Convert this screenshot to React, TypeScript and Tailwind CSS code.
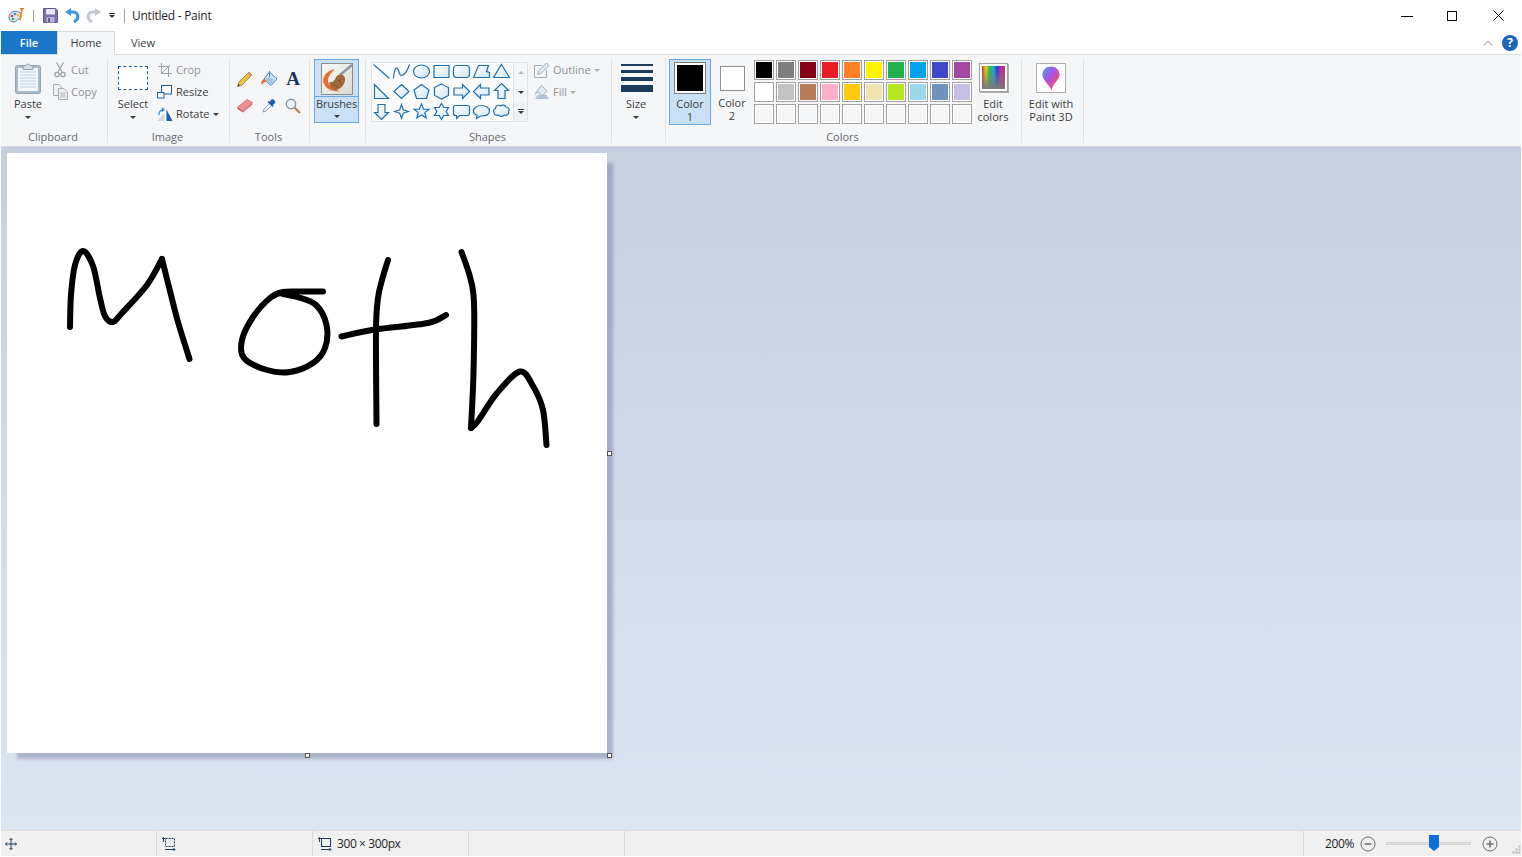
import type { ReactNode } from 'react';

const row1 = ['#000000', '#7f7f7f', '#880015', '#ed1c24', '#ff7f27', '#fff200', '#22b14c', '#00a2e8', '#3f48cc', '#a349a4'];
const row2 = ['#ffffff', '#c3c3c3', '#b97a57', '#ffaec9', '#ffc90e', '#efe4b0', '#b5e61d', '#99d9ea', '#7092be', '#c8bfe7'];
const row3 = ['', '', '', '', '', '', '', '', '', ''];

const shapes = [
	'M-8,-7 L8,7',
	'M-8,7 C-7,-6 -4,-6 -2,2 C0,7 5,2 8,-7',
	'M-8,0 a8,6.5 0 1 0 16,0 a8,6.5 0 1 0 -16,0Z',
	'M-7.5,-6 H7.5 V6 H-7.5Z',
	'M-5,-6 H5 a3,3 0 0 1 3,3 V3 a3,3 0 0 1 -3,3 H-5 a3,3 0 0 1 -3,-3 V-3 a3,3 0 0 1 3,-3Z',
	'M-8,6 L-3,-6 L7,-6 L5,0 L8,1 L8,6Z',
	'M0,-7 L8,6 L-8,6Z',
	'M-7,-7 L7,7 L-7,7Z',
	'M0,-7 L7.5,0 L0,7 L-7.5,0Z',
	'M0,-7 L7.5,-1.5 L5,7 L-5,7 L-7.5,-1.5Z',
	'M0,-7.5 L7,-4 L7,4 L0,7.5 L-7,4 L-7,-4Z',
	'M-7.5,-3.5 L1,-3.5 L1,-7 L8,0 L1,7 L1,3.5 L-7.5,3.5Z',
	'M7.5,-3.5 L-1,-3.5 L-1,-7 L-8,0 L-1,7 L-1,3.5 L7.5,3.5Z',
	'M0,-8 L7,-1 L3.5,-1 L3.5,7 L-3.5,7 L-3.5,-1 L-7,-1Z',
	'M0,8 L7,1 L3.5,1 L3.5,-7 L-3.5,-7 L-3.5,1 L-7,1Z',
	'M0,-7 L1.8,-1.8 L7,0 L1.8,1.8 L0,7 L-1.8,1.8 L-7,0 L-1.8,-1.8Z',
	'M0,-7.5 L2.1,-2.4 L7.5,-2.3 L3.3,1.1 L4.7,6.5 L0,3.5 L-4.7,6.5 L-3.3,1.1 L-7.5,-2.3 L-2.1,-2.4Z',
	'M0,-8 L2.3,-4 L7,-4 L4.6,0 L7,4 L2.3,4 L0,8 L-2.3,4 L-7,4 L-4.6,0 L-7,-4 L-2.3,-4Z',
	'M-6,-6 H6 a2,2 0 0 1 2,2 V2 a2,2 0 0 1 -2,2 H-2 L-5,7 V4 H-6 a2,2 0 0 1 -2,-2 V-4 a2,2 0 0 1 2,-2Z',
	'M-8,-0.5 C-8,-4 -4,-6 0,-6 C4,-6 8,-4 8,-0.5 C8,3 4,4.5 0,4.5 L-1,4.5 L-5,7 L-4.5,3.5 C-6.5,3 -8,1.5 -8,-0.5Z',
	'M-6,-3 C-6,-6 -2,-7 -1,-5.5 C1,-7 4,-6.5 4.5,-4.5 C7,-4.5 8.5,-2 7,0 C8,2.5 5,4.5 3,3.5 C1,5.5 -2,5 -3,3.5 C-5,4.5 -8,3 -7.5,0.5 C-8.5,-1 -7.5,-3 -6,-3Z',
];

const cx = [0, 1, 2, 3, 4, 5, 6];
const cy = [0, 1, 2];

// pen strokes in window coordinates, split at the sharp corners
const strokes: number[][][] = [
	[[70, 327], [71, 295], [75, 265], [83, 251], [93, 266], [100, 298], [105, 316], [113, 322], [122, 313], [147, 285], [162, 259]],
	[[162, 259], [170, 291], [178, 322], [189.5, 359]],
	[[323, 291.5], [300, 291.5], [283, 292], [270, 298], [253, 317], [242, 340], [244, 358], [267, 370], [290, 372], [313, 363], [325, 348], [326.5, 325], [316, 305], [297, 297], [283, 294]],
	[[388, 260], [382, 280], [378, 298], [376, 330], [376.5, 424]],
	[[341.5, 336.5], [375, 329.5], [428, 323], [446, 315]],
	[[461.5, 252], [470, 277], [474, 303], [473.5, 373], [471, 428]],
	[[471, 428], [478, 421], [497, 393], [520, 371.5], [533, 386], [543, 410], [546.5, 445]],
];

function smooth(pts: number[][]) {
	let d = `M${pts[0][0]},${pts[0][1]}`;
	for (let i = 0; i < pts.length - 1; i++) {
		const p0 = pts[Math.max(i - 1, 0)];
		const p1 = pts[i];
		const p2 = pts[i + 1];
		const p3 = pts[Math.min(i + 2, pts.length - 1)];
		const c1x = p1[0] + (p2[0] - p0[0]) / 6;
		const c1y = p1[1] + (p2[1] - p0[1]) / 6;
		const c2x = p2[0] - (p3[0] - p1[0]) / 6;
		const c2y = p2[1] - (p3[1] - p1[1]) / 6;
		d += ` C${c1x},${c1y} ${c2x},${c2y} ${p2[0]},${p2[1]}`;
	}
	return d;
}

function Caret({ className = 'border-t-[#3c3c3c]' }: { className?: string }) {
	return <span className={`inline-block w-0 h-0 border-x-[3px] border-x-transparent border-t-[3px] ${className}`} />;
}

function Group({ label, className, children }: { label?: string; className: string; children: ReactNode }) {
	return (
		<div className={`flex flex-col h-[85px] border-r border-[#e2e3e4] shrink-0 ${className}`}>
			<div className="flex h-[72px]">{children}</div>
			<div className="h-[13px] leading-[13px] text-center text-[#666a70] pr-[2px]">{label}</div>
		</div>
	);
}

function BigButton({ icon, lines, caret, className = '' }: { icon: ReactNode; lines: string[]; caret?: boolean; className?: string }) {
	return (
		<div className={`flex flex-col items-center pt-[2px] text-[#3c3c3c] ${className}`}>
			<div className="h-[37px] flex items-start justify-center pt-[3px]">{icon}</div>
			{lines.map((l) => (
				<div key={l} className="h-[13px] leading-[13px] whitespace-nowrap">{l}</div>
			))}
			{caret && <div className="h-[14px] flex items-center"><Caret /></div>}
		</div>
	);
}

function SmallRow({ icon, label, disabled, caret }: { icon: ReactNode; label: string; disabled?: boolean; caret?: boolean }) {
	return (
		<div className={`flex items-center h-[22px] ${disabled ? 'text-[#8d9196]' : 'text-[#3c3c3c]'}`}>
			<span className="w-[16px] h-[16px] mr-[3px] flex items-center justify-center">{icon}</span>
			{label}
			{caret && <span className="ml-[3px] flex"><Caret className={disabled ? 'border-t-[#a8abaf]' : 'border-t-[#3c3c3c]'} /></span>}
		</div>
	);
}

function PaletteIcon() {
	return (
		<svg width="17" height="16" viewBox="0 0 17 16">
			<path d="M1,9 C1,4 7,2 11,4 C14,6 14,10 11,11 C9,11 9,14 6,14 C3,14 1,12 1,9Z" fill="#dbe6ee" stroke="#5a7c96" />
			<circle cx="4" cy="8" r="1.3" fill="#e8443a" />
			<circle cx="7" cy="6" r="1.3" fill="#3a8fdc" />
			<circle cx="5" cy="11" r="1.3" fill="#42a85a" />
			<circle cx="10" cy="7" r="1.2" fill="#f2c230" />
			<path d="M14,1 L12,12" stroke="#e8963a" strokeWidth="2" />
			<path d="M12,0.5 h4" stroke="#c9702a" strokeWidth="1.5" />
		</svg>
	);
}

function SaveIcon() {
	return (
		<svg width="15" height="15" viewBox="0 0 15 15">
			<path d="M0.5,0.5 H12.5 L14.5,2.5 V14.5 H0.5Z" fill="#7d6fae" stroke="#64588f" />
			<rect x="3" y="1" width="9" height="5.5" fill="#e9e7f2" />
			<rect x="3.5" y="9" width="8" height="5.5" fill="#b9b3d4" />
			<rect x="5" y="10" width="2" height="4" fill="#64588f" />
		</svg>
	);
}

function UndoIcon({ color }: { color: string }) {
	return (
		<svg width="15" height="15" viewBox="0 0 15 15">
			<path d="M0,4 L6,0 V8Z" fill={color} />
			<path d="M5,4 H8 C11.5,4 12.8,6.5 12.8,8.8 C12.8,11 11.5,12.5 9,14" fill="none" stroke={color} strokeWidth="3.2" />
		</svg>
	);
}

function ClipboardIcon() {
	return (
		<svg width="26" height="31" viewBox="0 0 26 31">
			<rect x="0.5" y="2.5" width="25" height="28" rx="2" fill="#a9bccd" stroke="#8fa3b6" />
			<rect x="3" y="5" width="20" height="23" fill="#f2f6fa" />
			<path d="M5,9 H21 M5,12 H21 M5,15 H21 M5,18 H21 M5,21 H21 M5,24 H21" stroke="#c3d2e2" />
			<path d="M8,5 V3 H10.5 C10.5,0.5 15.5,0.5 15.5,3 H18 V6.5 H8Z" fill="#d4dde6" stroke="#93a3b3" />
		</svg>
	);
}

function ScissorsIcon() {
	return (
		<svg width="12" height="16" viewBox="0 0 12 16" fill="none" stroke="#9fa4aa" strokeWidth="1.3">
			<path d="M2.5,0.5 L8,10 M9.5,0.5 L4,10" />
			<circle cx="3" cy="12.5" r="2.2" />
			<circle cx="9" cy="12.5" r="2.2" />
		</svg>
	);
}

function CopyIcon() {
	return (
		<svg width="15" height="16" viewBox="0 0 15 16" fill="#eef1f4" stroke="#a8adb3">
			<path d="M0.5,0.5 H6 L8.5,3 V11.5 H0.5Z" />
			<path d="M5.5,4.5 H11 L14.5,8 V15.5 H5.5Z" />
			<path d="M7,9 H13 M7,11 H13 M7,13 H13" strokeWidth="0.8" />
		</svg>
	);
}

function CropIcon() {
	return (
		<svg width="14" height="14" viewBox="0 0 14 14" fill="none" stroke="#9aa1a8">
			<path d="M3.5,0 V10.5 H14 M0,3.5 H10.5 V14" />
			<path d="M3.5,10.5 L12,2" />
		</svg>
	);
}

function ResizeIcon() {
	return (
		<svg width="16" height="14" viewBox="0 0 16 14" fill="#fff" stroke="#1b5c9e">
			<rect x="4.5" y="0.5" width="10" height="8.5" />
			<rect x="0.5" y="7.5" width="6.5" height="5.5" />
		</svg>
	);
}

function RotateIcon() {
	return (
		<svg width="17" height="15" viewBox="0 0 17 15">
			<path d="M0,14.5 H8 V6Z" fill="#d4d7da" />
			<path d="M10,14.5 H16.5 L10,2Z" fill="#1d62a8" />
			<path d="M2,8 C2,4 4,2.5 7,2.5 M5,0.5 L7.5,2.5 L5,4.5" fill="none" stroke="#2a7ac8" strokeWidth="1.2" />
		</svg>
	);
}

function PencilIcon() {
	return (
		<svg width="16" height="16" viewBox="0 0 16 16">
			<path d="M0.5,15.5 L2,11 L12,1 L15,4 L5,14Z" fill="#f2c23c" stroke="#7a6a30" strokeWidth="0.7" />
			<path d="M0.5,15.5 L1.3,13 L3,14.7Z" fill="#333" />
			<path d="M12,1 L15,4 L13.5,5.5 L10.5,2.5Z" fill="#e88a72" />
		</svg>
	);
}

function BucketIcon() {
	return (
		<svg width="17" height="16" viewBox="0 0 17 16">
			<path d="M8.5,1 L16,8 L10,14.5 L3,8Z" fill="#cfe4f4" stroke="#4b85b5" />
			<path d="M8.5,0 V6" stroke="#4b85b5" />
			<path d="M3,8 C0,9 0,13 1,14 C2,12 3,11 6,10.5Z" fill="#ef6c2a" />
			<path d="M4,8 C7,6 10,6.5 13,8.5 L10,13.5Z" fill="#9cc6e6" />
		</svg>
	);
}

function EraserIcon() {
	return (
		<svg width="16" height="14" viewBox="0 0 16 14">
			<path d="M0.5,8 L10,0.5 L15.5,3.5 L6,12.5Z" fill="#ef8f8f" stroke="#c97070" strokeWidth="0.7" />
			<path d="M0.5,8 L6,12.5 L6,13.5 L0.5,10Z" fill="#b95c5c" />
			<path d="M6,12.5 L15.5,3.5 V5.5 L6,13.5Z" fill="#d56a6a" />
		</svg>
	);
}

function DropperIcon() {
	return (
		<svg width="15" height="15" viewBox="0 0 15 15">
			<path d="M1,14 L2,11 L8,5 L10,7 L4,13Z" fill="#e7eef4" stroke="#7d8a96" strokeWidth="0.8" />
			<path d="M7,4 L9.5,1.5 C11,0 14.5,3.5 13,5 L10.7,7.5 Z" fill="#1f5fa6" />
			<path d="M6,3.5 L11,8.5" stroke="#1f5fa6" strokeWidth="1.6" />
		</svg>
	);
}

function MagnifierIcon() {
	return (
		<svg width="16" height="16" viewBox="0 0 16 16">
			<circle cx="6" cy="6" r="4.7" fill="#e9f2f8" stroke="#88939c" strokeWidth="1.4" />
			<path d="M9.5,9.5 L15,15" stroke="#b5803f" strokeWidth="2.2" />
		</svg>
	);
}

function BrushArt() {
	return (
		<svg width="32" height="32" viewBox="0 0 32 32">
			<defs>
				<linearGradient id="brush-bg" x1="0" y1="0" x2="1" y2="1">
					<stop offset="0" stopColor="#fbfbf9" />
					<stop offset="1" stopColor="#d9d9d2" />
				</linearGradient>
			</defs>
			<rect x="0.5" y="0.5" width="31" height="31" fill="url(#brush-bg)" stroke="#8c8c8c" />
			<path d="M31,2 L19,12" stroke="#8f98a2" strokeWidth="2.4" />
			<path d="M14,6 C5,8 0,15 3,21 C6,27 13,29 19,28 C13,26 6,22 7,16 C8,12 11,9 14,6Z" fill="#ec6a2c" />
			<path d="M8,19 C12,20 14,17 15,14 C18,10 23,11 24,15 C25,20 20,27 14,27 C11,26 9,23 8,19Z" fill="#a0683a" />
			<path d="M14,21 L17,25 M18,17 L21,22" stroke="#7b4c28" />
		</svg>
	);
}

function Swatch({ color }: { color: string }) {
	return (
		<div className="w-[20px] h-[20px] border border-[#a0a0a0] p-px bg-white">
			<div className={`w-full h-full ${color ? '' : 'bg-[#f5f6f7]'}`} style={color ? { backgroundColor: color } : undefined} />
		</div>
	);
}

function StatusCell({ className, children }: { className: string; children?: ReactNode }) {
	return <div className={`h-full flex items-center border-r border-[#d9d9d9] shrink-0 ${className}`}>{children}</div>;
}

export default function App() {
	return (
		<div className="w-[1522px] h-[857px] flex flex-col bg-white px-px pb-px overflow-hidden font-['Open_Sans','Noto_Sans',sans-serif] text-[11px]">
			{/* title bar */}
			<div className="h-[31px] flex items-center shrink-0 pl-[7px] pr-[17px]">
				<PaletteIcon />
				<div className="w-px h-[12px] bg-[#a0a0a0] ml-[8px] mr-[9px]" />
				<SaveIcon />
				<div className="ml-[7px]"><UndoIcon color="#3a96e0" /></div>
				<div className="ml-[6px] -scale-x-100"><UndoIcon color="#c0c8d0" /></div>
				<div className="ml-[8px] flex flex-col items-center gap-px">
					<div className="w-[6px] h-px bg-[#333]" />
					<Caret className="border-t-[#333]" />
				</div>
				<div className="w-px h-[14px] bg-[#a0a0a0] ml-[9px] mr-[7px]" />
				<span className="text-[12px] text-[#1f1f1f] tracking-[-0.25px]">Untitled - Paint</span>
				<div className="ml-auto flex items-center">
					<svg width="12" height="12" viewBox="0 0 12 12" stroke="#000"><path d="M0,6.5 H12" /></svg>
					<svg className="ml-[34px]" width="10" height="10" viewBox="0 0 10 10" fill="none" stroke="#000"><rect x="0.5" y="0.5" width="9" height="9" /></svg>
					<svg className="ml-[36px]" width="11" height="11" viewBox="0 0 11 11" stroke="#000"><path d="M0.5,0.5 L10.5,10.5 M10.5,0.5 L0.5,10.5" /></svg>
				</div>
			</div>

			{/* tabs */}
			<div className="h-[24px] flex shrink-0 border-b border-[#dadbdc] pr-[3px] text-[11px]">
				<div className="w-[56px] h-[23px] pt-px bg-[#1a76c8] text-white font-semibold flex items-center justify-center">File</div>
				<div className="w-[58px] h-[24px] bg-[#f5f6f7] border-x border-t border-[#dadbdc] text-[#3c3c3c] flex items-center justify-center">Home</div>
				<div className="w-[56px] h-[23px] pt-px text-[#3c3c3c] flex items-center justify-center">View</div>
				<div className="ml-auto flex items-center gap-[9px]">
					<svg width="10" height="6" viewBox="0 0 10 6" fill="none" stroke="#b4b8bc" strokeWidth="1.2"><path d="M0.5,5.5 L5,1 L9.5,5.5" /></svg>
					<div className="w-[16px] h-[16px] rounded-full bg-[#1b64b8] text-white font-bold text-[12px] leading-[16px] text-center">?</div>
				</div>
			</div>

			{/* ribbon */}
			<div className="h-[92px] flex shrink-0 bg-[#f5f6f7] border-b border-[#d5dae2] pt-[3px] text-[11px]">
				<Group label="Clipboard" className="w-[107px]">
					<BigButton className="w-[40px] ml-[7px]" icon={<ClipboardIcon />} lines={['Paste']} caret />
					<div className="ml-[4px] pt-px">
						<SmallRow disabled icon={<ScissorsIcon />} label="Cut" />
						<SmallRow disabled icon={<CopyIcon />} label="Copy" />
					</div>
				</Group>
				<Group label="Image" className="w-[122px]">
					<BigButton
						className="w-[40px] ml-[5px]"
						icon={<div className="w-[30px] h-[24px] mt-[3px] border border-dashed border-[#1b5c9e] bg-white" />}
						lines={['Select']}
						caret
					/>
					<div className="ml-[4px] pt-px">
						<SmallRow disabled icon={<CropIcon />} label="Crop" />
						<SmallRow icon={<ResizeIcon />} label="Resize" />
						<SmallRow icon={<RotateIcon />} label="Rotate" caret />
					</div>
				</Group>
				<Group label="Tools" className="w-[80px]">
					<div className="grid grid-cols-[repeat(3,24px)] grid-rows-[repeat(2,27px)] ml-[3px] mt-[7px] place-items-center">
						<PencilIcon />
						<BucketIcon />
						<span className="font-['Liberation_Serif',serif] font-bold text-[19px] leading-none text-[#17365d]">A</span>
						<EraserIcon />
						<DropperIcon />
						<MagnifierIcon />
					</div>
				</Group>
				<Group className="w-[56px]">
					<div className="w-[45px] h-[64px] ml-[4px] mt-px bg-[#c9e0f7] border border-[#64a8e6] flex flex-col items-center text-[#3c3c3c]">
						<div className="h-[37px] w-full flex justify-center pt-[3px] border-b border-[#64a8e6]"><BrushArt /></div>
						<div className="h-[14px] leading-[14px] tracking-[-0.1px]">Brushes</div>
						<div className="h-[11px] flex items-center"><Caret /></div>
					</div>
				</Group>
				<Group label="Shapes" className="w-[246px]">
					<div className="flex ml-[5px] mt-[4px] h-[60px]">
						<div className="w-[143px] h-[60px] bg-[#fbfcfd] border border-[#dfe2e5]">
							<svg width="141" height="58" viewBox="1 1 141 58">
								<defs>
									<linearGradient id="shape-fill" x1="0" y1="0" x2="1" y2="1">
										<stop offset="0" stopColor="#ffffff" />
										<stop offset="1" stopColor="#cfe6f3" />
									</linearGradient>
								</defs>
								{cy.map((r) =>
									cx.map((c) => (
										<g key={`${r}-${c}`} transform={`translate(${10.5 + c * 20},${9.5 + r * 20})`}>
											<path
												d={shapes[r * 7 + c]}
												fill={r === 0 && c < 2 ? 'none' : 'url(#shape-fill)'}
												stroke="#1f6fb0"
												strokeWidth="1.2"
											/>
										</g>
									)),
								)}
							</svg>
						</div>
						<div className="w-[14px] h-[60px] flex flex-col border-y border-r border-[#dfe2e5]">
							<div className="h-[19px] flex items-center justify-center">
								<span className="w-0 h-0 border-x-[3px] border-x-transparent border-b-[3px] border-b-[#b8bcc0]" />
							</div>
							<div className="h-[20px] flex items-center justify-center"><Caret /></div>
							<div className="h-[19px] flex flex-col items-center justify-center gap-px bg-[#f0f1f2]">
								<div className="w-[6px] h-px bg-[#3c3c3c]" />
								<Caret />
							</div>
						</div>
					</div>
					<div className="ml-[6px] pt-px">
						<SmallRow
							disabled
							caret
							label="Outline"
							icon={
								<svg width="16" height="16" viewBox="0 0 16 16" fill="none" stroke="#a0aebc">
									<path d="M0.5,3.5 H8 M0.5,3.5 V15.5 H12.5 V8" />
									<path d="M3.5,12.5 L4.5,9 L12.5,1 L15,3.5 L7,11.5Z" fill="#e4e9ee" />
								</svg>
							}
						/>
						<SmallRow
							disabled
							caret
							label="Fill"
							icon={
								<svg width="17" height="16" viewBox="0 0 17 16">
									<path d="M1,15.5 H16 L13,11 H4Z" fill="#b3c3d4" />
									<path d="M8,1 L14,7 L9,12 L3,7Z" fill="#dfe6ec" stroke="#a0aebc" />
									<path d="M3,7 C1,8 0.5,10 1,12 C2,10.5 3,9.5 5,9Z" fill="#bcc6d0" />
								</svg>
							}
						/>
					</div>
				</Group>
				<Group className="w-[54px]">
					<BigButton
						className="w-[48px]"
						icon={
							<div className="w-[32px] flex flex-col gap-[4px] mt-[1px] ml-[2px]">
								<div className="h-[2px] bg-[#1e3a5c]" />
								<div className="h-[3px] bg-[#1e3a5c]" />
								<div className="h-[4px] bg-[#1e3a5c]" />
								<div className="h-[7px] bg-[#1e3a5c]" />
							</div>
						}
						lines={['Size']}
						caret
					/>
				</Group>
				<Group label="Colors" className="w-[356px]">
					<div className="w-[42px] h-[66px] ml-[3px] mt-px bg-[#c9e0f7] border border-[#64a8e6] flex flex-col items-center text-[#3c3c3c]">
						<div className="w-[32px] h-[32px] mt-[2px] mb-[3px] border border-[#7d7d7d] p-[2px] bg-white">
							<div className="w-full h-full bg-black" />
						</div>
						<div className="h-[13px] leading-[13px]">Color</div>
						<div className="h-[13px] leading-[13px]">1</div>
					</div>
					<div className="w-[42px] flex flex-col items-center pt-[8px] text-[#3c3c3c]">
						<div className="w-[25px] h-[25px] bg-white border border-[#8f8f8f] mb-[5px]" />
						<div className="h-[13px] leading-[13px]">Color</div>
						<div className="h-[13px] leading-[13px]">2</div>
					</div>
					<div className="flex flex-col gap-[2px] mt-[2px] ml-[1px]">
						{[row1, row2, row3].map((colors, i) => (
							<div key={i} className="flex gap-[2px]">
								{colors.map((c, j) => (
									<Swatch key={j} color={c} />
								))}
							</div>
						))}
					</div>
					<BigButton
						className="w-[44px] ml-[-1px]"
						icon={
							<div className="w-[29px] h-[29px] bg-white border border-[#a0a0a0] p-[2px] shadow-[1px_1px_0_#b0b0b0]">
								<div className="w-full h-full bg-[linear-gradient(to_bottom,transparent,#7a7a7a),linear-gradient(to_right,#e0281e,#f0e010,#20c040,#10b0e0,#3030d0,#c020c0,#e0281e)]" />
							</div>
						}
						lines={['Edit', 'colors']}
					/>
				</Group>
				<Group className="w-[62px]">
					<BigButton
						className="w-[60px] ml-[-1px]"
						icon={
							<div className="w-[30px] h-[30px] bg-white border border-[#b0b0b0] flex items-center justify-center">
								<svg width="18" height="25" viewBox="0 0 18 25">
									<defs>
										<linearGradient id="drop" x1="0" y1="0" x2="1" y2="1">
											<stop offset="0" stopColor="#3aa0f0" />
											<stop offset="0.45" stopColor="#b050e0" />
											<stop offset="0.75" stopColor="#f05070" />
											<stop offset="1" stopColor="#f8a020" />
										</linearGradient>
									</defs>
									<path d="M9,0.5 C14,0.5 17.5,4 17.5,9 C17.5,14 11,17 9.5,24.5 C8,19 0.5,14.5 0.5,9 C0.5,4 4,0.5 9,0.5Z" fill="url(#drop)" />
								</svg>
							</div>
						}
						lines={['Edit with', 'Paint 3D']}
					/>
				</Group>
			</div>

			{/* canvas area */}
			<div className="flex-1 min-h-0 bg-[linear-gradient(to_bottom,#c5cfe0,#dbe5f2)] pl-[6px] pt-[6px] border-b border-[#d9d9d9]">
				<div className="relative w-[600px] h-[600px] bg-white shadow-[8px_8px_3px_-2px_rgba(110,125,155,0.45)]">
					<svg width="600" height="600" viewBox="0 0 600 600" fill="none" stroke="#000" strokeWidth="6" strokeLinecap="round" strokeLinejoin="round">
						<g transform="translate(-7,-153)">
							{strokes.map((s, i) => (
								<path key={i} d={smooth(s)} />
							))}
						</g>
					</svg>
					<div className="absolute left-[600px] top-[298px] w-[5px] h-[5px] bg-white border border-[#555]" />
					<div className="absolute left-[298px] top-[600px] w-[5px] h-[5px] bg-white border border-[#555]" />
					<div className="absolute left-[600px] top-[600px] w-[5px] h-[5px] bg-white border border-[#555]" />
				</div>
			</div>

			{/* status bar */}
			<div className="h-[25px] flex items-center shrink-0 bg-[#f0f0f0] text-[12px] text-[#1f1f1f] tracking-[-0.4px]">
				<StatusCell className="w-[156px] pl-[4px]">
					<svg width="12" height="12" viewBox="0 0 12 12" fill="none" stroke="#1e3a5c">
						<path d="M6,0.5 V11.5 M0.5,6 H11.5 M4.5,2 L6,0.5 L7.5,2 M4.5,10 L6,11.5 L7.5,10 M2,4.5 L0.5,6 L2,7.5 M10,4.5 L11.5,6 L10,7.5" />
					</svg>
				</StatusCell>
				<StatusCell className="w-[156px] pl-[5px]">
					<svg width="14" height="14" viewBox="0 0 14 14" fill="none" stroke="#1e3a5c">
						<path d="M1.5,5 V0.5 M0,2 L1.5,0.5 L3,2" />
						<rect x="3.5" y="1.5" width="9" height="8" strokeDasharray="2 1" />
						<path d="M3,12.5 H13 M11.5,11 L13,12.5 L11.5,14" />
					</svg>
				</StatusCell>
				<StatusCell className="w-[156px] pl-[5px] gap-[5px]">
					<svg width="14" height="14" viewBox="0 0 14 14" fill="none" stroke="#1e3a5c">
						<path d="M1.5,5 V0.5 M0,2 L1.5,0.5 L3,2" />
						<rect x="3.5" y="1.5" width="9" height="8" />
						<path d="M3,12.5 H13 M11.5,11 L13,12.5 L11.5,14" />
					</svg>
					300 × 300px
				</StatusCell>
				<StatusCell className="w-[156px]" />
				<StatusCell className="w-[679px]" />
				<div className="pl-[21px] w-[56px] shrink-0">200%</div>
				<svg className="shrink-0" width="16" height="16" viewBox="0 0 16 16" fill="none" stroke="#6e6e6e">
					<circle cx="8" cy="8" r="7" />
					<path d="M4.5,8 H11.5" strokeWidth="1.5" />
				</svg>
				<div className="relative w-[85px] h-[3px] ml-[10px] shrink-0 bg-[#e0e3e0] border border-[#d2d4d2]">
					<svg className="absolute left-[42px] -top-[8px]" width="10" height="16" viewBox="0 0 10 16">
						<path d="M0,0 H10 V12 L5,16 L0,12Z" fill="#0a6fd6" />
					</svg>
				</div>
				<svg className="ml-[11px] shrink-0" width="16" height="16" viewBox="0 0 16 16" fill="none" stroke="#6e6e6e">
					<circle cx="8" cy="8" r="7" />
					<path d="M4.5,8 H11.5 M8,4.5 V11.5" strokeWidth="1.5" />
				</svg>
				<svg className="ml-[14px] mt-[12px] shrink-0" width="9" height="9" viewBox="0 0 9 9" fill="#b5b5b5">
					<rect x="6.5" y="0.5" width="2" height="2" />
					<rect x="3.5" y="3.5" width="2" height="2" />
					<rect x="6.5" y="3.5" width="2" height="2" />
					<rect x="0.5" y="6.5" width="2" height="2" />
					<rect x="3.5" y="6.5" width="2" height="2" />
					<rect x="6.5" y="6.5" width="2" height="2" />
				</svg>
			</div>
		</div>
	);
}
